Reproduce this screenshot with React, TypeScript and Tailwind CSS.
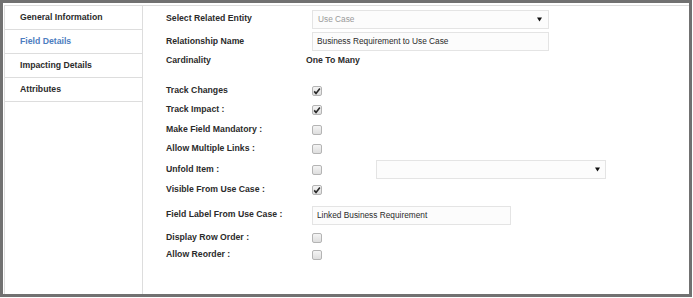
import React from 'react';

const font = { fontFamily: '"Liberation Sans", Arial, sans-serif' };

const tabs = ['General Information', 'Field Details', 'Impacting Details', 'Attributes'];

const Check: React.FC<{ checked?: boolean }> = ({ checked }) => (
  <span className="flex h-[10px] w-[10px] items-center justify-center rounded-[2px] border border-[#b4b4b4] bg-gradient-to-b from-[#f4f4f4] to-[#dedede]">
    {checked && (
      <svg width="8" height="8" viewBox="0 0 8 8">
        <path d="M1.2 4.4 L3 6.4 L6.9 1.4" fill="none" stroke="#2a2a2a" strokeWidth="1.6" />
      </svg>
    )}
  </span>
);

const Arrow = () => (
  <svg width="5" height="5" viewBox="0 0 5 5">
    <path d="M0 0.5 H5 L2.5 4.5 Z" fill="#111" />
  </svg>
);

const Row: React.FC<{ label: string; className: string; children?: React.ReactNode }> = ({ label, className, children }) => (
  <div className={`flex items-center ${className}`}>
    <div className="w-[146px] shrink-0 text-[8.7px] font-bold text-[#2b2b2b]">{label}</div>
    <div className="flex items-center">{children}</div>
  </div>
);

export default function App() {
  return (
    <div style={font} className="h-[297px] w-[692px] border-[3px] border-[#717171] bg-white">
      <div className="flex h-full flex-col pl-[1px] pt-[2px]">
        <div className="flex flex-1 border-l border-t border-[#dddddd]">
          <div className="w-[138px] border-r border-[#dddddd]">
            {tabs.map((t) => (
              <div
                key={t}
                className={`flex h-[24px] items-center border-b border-[#dddddd] pl-[15px] text-[8.7px] font-bold ${
                  t === 'Field Details' ? 'text-[#4d7dc0]' : 'text-[#2b2b2b]'
                }`}
              >
                {t}
              </div>
            ))}
          </div>

          <div className="flex flex-1 flex-col pl-[23px] pt-[3px]">
            <Row label="Select Related Entity" className="h-[20px]">
              <div className="flex h-[19px] w-[237px] items-center justify-between border border-[#e4e4e4] bg-[#fcfcfc] pl-[5px] pr-[6px] text-[8.3px] text-[#9a9a9a]">
                <span>Use Case</span>
                <Arrow />
              </div>
            </Row>
            <Row label="Relationship Name" className="mt-[2px] h-[21px]">
              <div className="flex h-[19px] w-[237px] items-center border border-[#e4e4e4] bg-[#fcfcfc] pl-[4px] text-[8.3px] text-[#2b2b2b]">
                Business Requirement to Use Case
              </div>
            </Row>
            <Row label="Cardinality" className="h-[18px]">
              <span className="-ml-[6px] text-[8.7px] font-bold text-[#2b2b2b]">One To Many</span>
            </Row>
            <Row label="Track Changes" className="mt-[12px] h-[18px]">
              <Check checked />
            </Row>
            <Row label="Track Impact :" className="h-[20px]">
              <Check checked />
            </Row>
            <Row label="Make Field Mandatory :" className="h-[20px]">
              <Check />
            </Row>
            <Row label="Allow Multiple Links :" className="h-[18px]">
              <Check />
            </Row>
            <Row label="Unfold Item :" className="h-[23px]">
              <Check />
              <div className="ml-[54px] flex h-[19px] w-[230px] items-center justify-end border border-[#e4e4e4] bg-[#fcfcfc] pr-[5px]">
                <Arrow />
              </div>
            </Row>
            <Row label="Visible From Use Case :" className="h-[18px]">
              <Check checked />
            </Row>
            <Row label="Field Label From Use Case :" className="mt-[4px] h-[24px]">
              <div className="flex h-[19px] w-[199px] items-center border border-[#e4e4e4] bg-[#fcfcfc] pl-[4px] text-[8.3px] text-[#2b2b2b]">
                Linked Business Requirement
              </div>
            </Row>
            <Row label="Display Row Order :" className="mt-[1px] h-[19px]">
              <Check />
            </Row>
            <Row label="Allow Reorder :" className="h-[16px]">
              <Check />
            </Row>
          </div>
        </div>
      </div>
    </div>
  );
}
